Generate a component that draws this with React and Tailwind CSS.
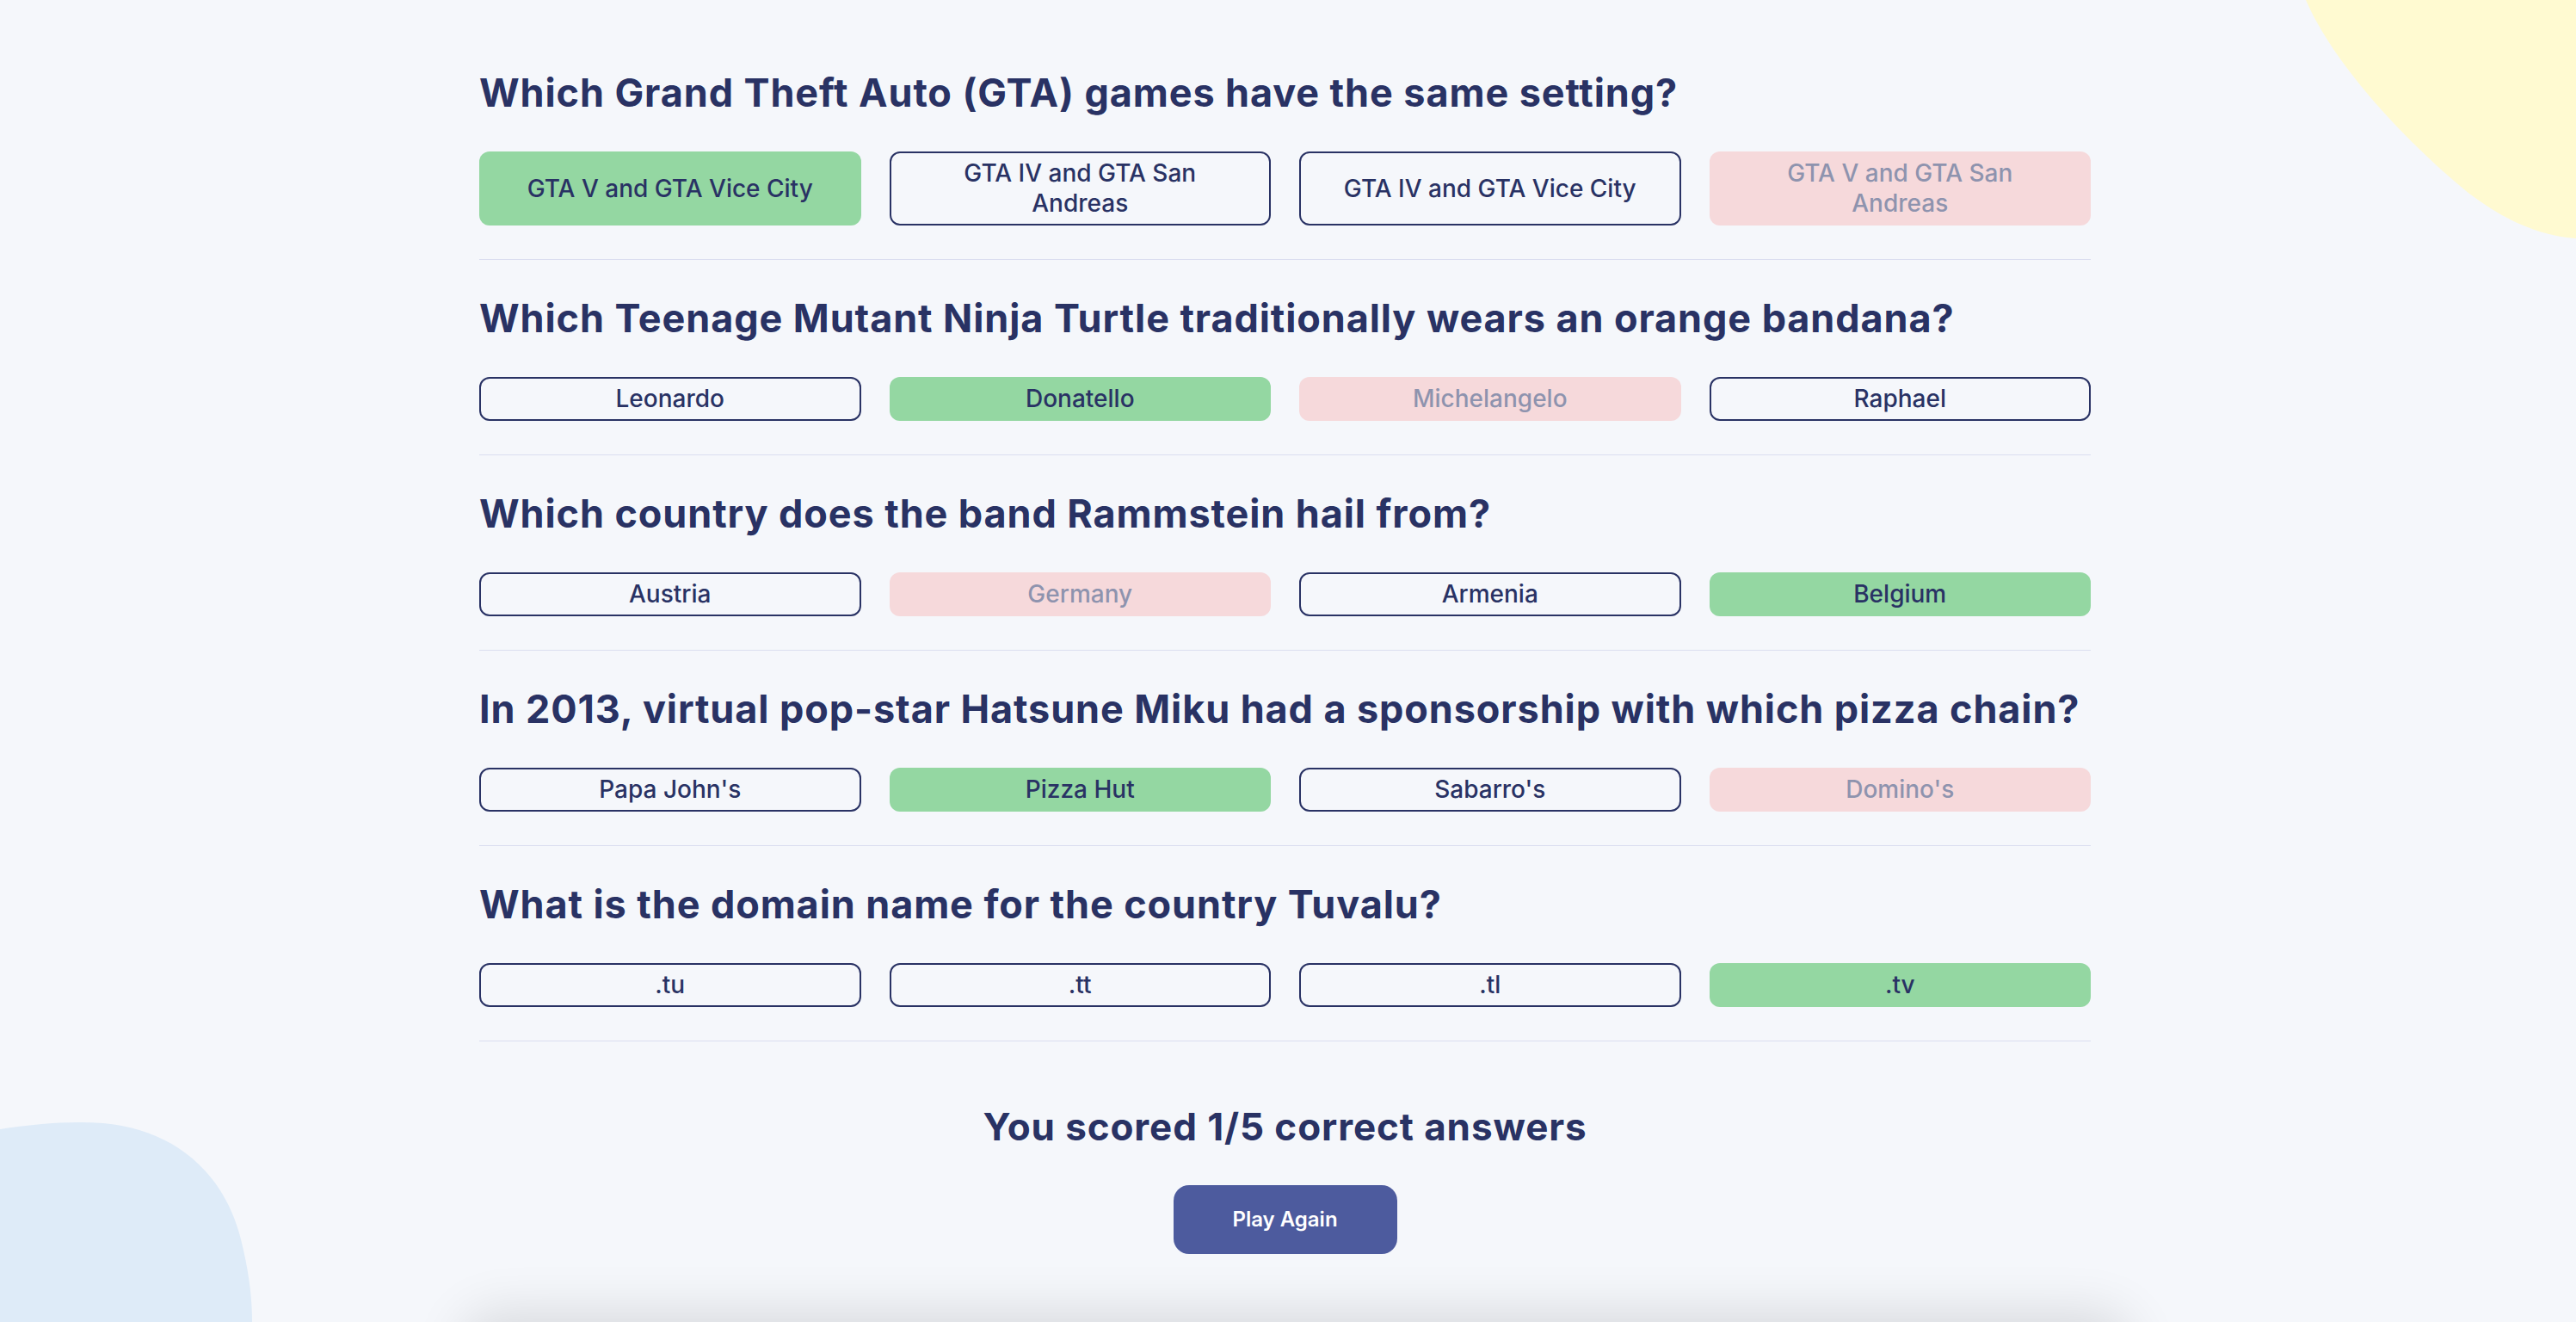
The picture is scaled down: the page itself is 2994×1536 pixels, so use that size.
import React from "react";

const questions = [
  {
    q: "Which Grand Theft Auto (GTA) games have the same setting?",
    a: [
      ["GTA V and GTA Vice City", "correct"],
      ["GTA IV and GTA San Andreas", "none"],
      ["GTA IV and GTA Vice City", "none"],
      ["GTA V and GTA San Andreas", "wrong"],
    ],
  },
  {
    q: "Which Teenage Mutant Ninja Turtle traditionally wears an orange bandana?",
    a: [
      ["Leonardo", "none"],
      ["Donatello", "correct"],
      ["Michelangelo", "wrong"],
      ["Raphael", "none"],
    ],
  },
  {
    q: "Which country does the band Rammstein hail from?",
    a: [
      ["Austria", "none"],
      ["Germany", "wrong"],
      ["Armenia", "none"],
      ["Belgium", "correct"],
    ],
  },
  {
    q: "In 2013, virtual pop-star Hatsune Miku had a sponsorship with which pizza chain?",
    a: [
      ["Papa John's", "none"],
      ["Pizza Hut", "correct"],
      ["Sabarro's", "none"],
      ["Domino's", "wrong"],
    ],
  },
  {
    q: "What is the domain name for the country Tuvalu?",
    a: [
      [".tu", "none"],
      [".tt", "none"],
      [".tl", "none"],
      [".tv", "correct"],
    ],
  },
];

function Answer({ text, state }) {
  const base =
    "flex items-center justify-center rounded-[12px] border-2 px-[36px] py-[6px] text-center text-[28px] leading-[35px] font-medium text-[#293264]";
  if (state === "correct")
    return <div className={base + " border-transparent bg-[#94D7A2]"}>{text}</div>;
  if (state === "wrong")
    return (
      <div className={base + " border-transparent bg-[#F8BCBC] opacity-50"}>{text}</div>
    );
  return <div className={base + " border-[#293264]"}>{text}</div>;
}

export default function App() {
  return (
    <div
      className="relative min-h-[1536px] w-full overflow-hidden bg-[#F5F7FB]"
      style={{ fontFamily: "Inter, 'Noto Sans', sans-serif" }}
    >
      <svg
        className="absolute left-[2670px] top-0"
        width="324"
        height="290"
        viewBox="0 0 324 290"
      >
        <path
          d="M10 0 C 40 70, 120 160, 200 225 C 240 255, 280 274, 324 277 L324 0 Z"
          fill="#FFFAD1"
        />
      </svg>
      <svg
        className="absolute left-0 top-[1300px]"
        width="300"
        height="236"
        viewBox="0 0 300 236"
      >
        <path
          d="M0 12 C 40 6, 80 2, 120 5 C 200 12, 260 60, 280 140 C 290 180, 293 210, 293 236 L0 236 Z"
          fill="#DEEBF8"
        />
      </svg>

      <div className="relative ml-[557px] w-[1873px] pt-[81px]">
        {questions.map((item, i) => (
          <div
            key={i}
            className={
              "border-b border-[#DBDEF0] pb-[39px] " + (i === 0 ? "pt-0" : "pt-[41px]")
            }
          >
            <h2 className="mb-[41px] text-[45px] leading-[54px] font-bold tracking-[0.9px] text-[#293264]">
              {item.q}
            </h2>
            <div className="grid grid-cols-4 gap-[33px]">
              {item.a.map(([t, s], j) => (
                <Answer key={j} text={t} state={s} />
              ))}
            </div>
          </div>
        ))}

        <div className="flex flex-col items-center pt-[73px]">
          <p className="text-[44px] leading-[53px] font-bold tracking-[0.9px] text-[#293264]">
            You scored 1/5 correct answers
          </p>
          <button className="mt-[41px] flex h-[80px] w-[260px] items-center justify-center rounded-[18px] bg-[#4D5B9E] text-[24px] font-semibold text-white">
            Play Again
          </button>
        </div>

        <div className="mx-auto mt-[88px] h-[300px] w-[1900px] rounded-[20px] bg-[#F5F7FB] shadow-[0_0_60px_20px_rgba(0,0,0,0.12)]" />
      </div>
    </div>
  );
}
